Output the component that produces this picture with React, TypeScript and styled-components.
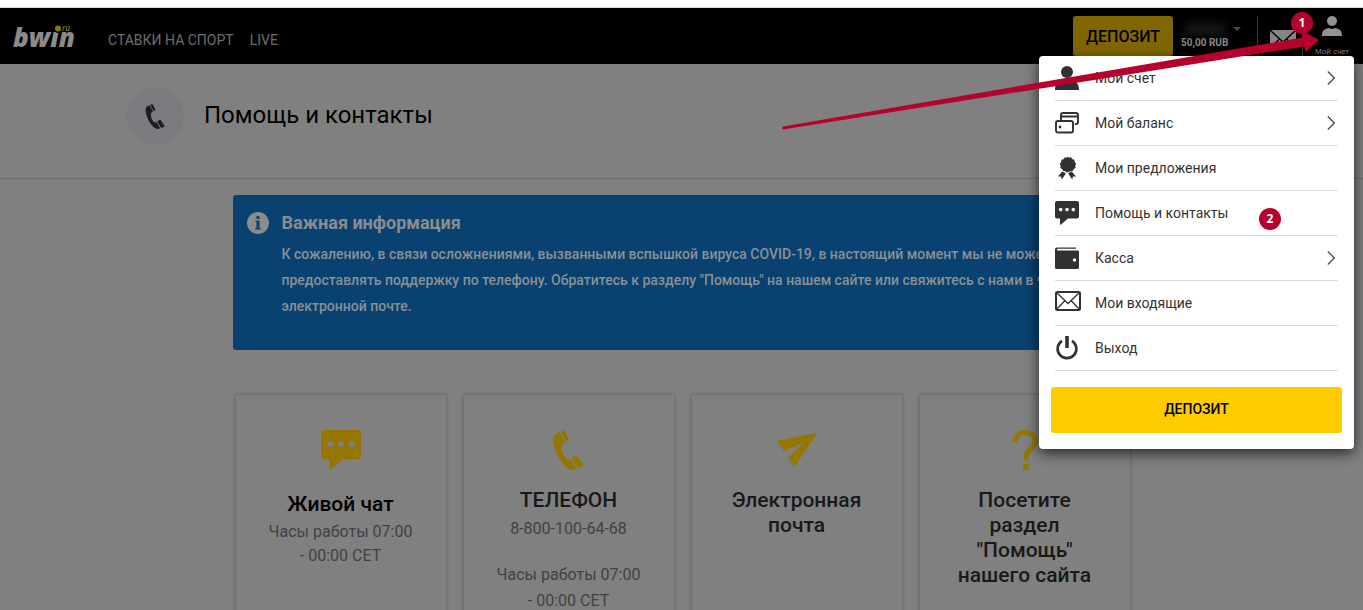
import React from 'react';
import styled, { createGlobalStyle } from 'styled-components';

const Global = createGlobalStyle`
  *, *::before, *::after { box-sizing: border-box; }
  body {
    margin: 0;
    background: #808080;
    color: #000;
    font-family: Roboto, "Liberation Sans", sans-serif;
    overflow-x: hidden;
  }
  h1, h2, h3, p, ul { margin: 0; padding: 0; }
  ul { list-style: none; }
  a { color: inherit; text-decoration: none; }
  button { font-family: inherit; cursor: pointer; border: 0; }
  svg { display: block; flex: none; }
`;

const Page = styled.div`
  position: relative;
  display: flex;
  flex-direction: column;
  height: 100vh;
  overflow: hidden;
`;

const TopStrip = styled.div`
  flex: none;
  height: 8px;
  background: #fff;
  border-bottom: 1px solid #d8d8d8;
`;

const Header = styled.header`
  flex: none;
  display: flex;
  align-items: flex-start;
  height: 56px;
  padding: 0 13px 0 12px;
  background: #000;
`;

const Logo = styled.a`
  flex: none;
  display: block;
  margin-top: 8px;
`;

const MainNav = styled.nav`
  display: flex;
  gap: 16px;
  margin: 24px auto 0 28px;
  font-size: 14px;
  line-height: 16px;
  color: #6e6e6e;
`;

const HeaderDeposit = styled.button`
  width: 100px;
  height: 40px;
  margin-top: 8px;
  padding: 0;
  border-radius: 3px;
  background: #806600;
  color: #000;
  font-size: 16px;
  font-weight: 500;
`;

const Balance = styled.a`
  display: grid;
  grid-template-columns: 52px 10px;
  align-items: center;
  margin: 14px 0 0 8px;
  color: #8b8b8b;
  font-size: 10px;
  line-height: 14px;
  font-weight: 700;
`;

const HiddenName = styled.span`
  width: 40px;
  height: 10px;
  margin: 2px 4px;
  background: #1c1c1c;
  filter: blur(4px);
`;

const HeaderIcon = styled.a`
  display: flex;
  justify-content: center;
  width: 46px;
  height: 40px;
  margin: 8px 0 0 14px;
  padding: 14px 0 0 6px;
  border-left: 1px solid #3c3c3c;
  border-right: 1px solid #3c3c3c;
`;

const Account = styled.a`
  display: flex;
  flex-direction: column;
  align-items: center;
  gap: 12px;
  width: 36px;
  margin-top: 8px;
  margin-left: 11px;
  color: #8b8b8b;
  font-family: "Liberation Sans", sans-serif;
  font-size: 8px;
  line-height: 8px;
  white-space: nowrap;
`;

const TitleBar = styled.section`
  flex: none;
  height: 115px;
  padding: 23px 16px 0;
  border-bottom: 1px solid #6c6c6c;
`;

const TitleInner = styled.div`
  display: flex;
  align-items: center;
  gap: 20px;
  max-width: 1111px;
  margin: 0 auto;
`;

const PhoneDisc = styled.span`
  display: grid;
  place-items: center;
  width: 58px;
  height: 58px;
  border-radius: 50%;
  background: #797b7f;
`;

const Title = styled.h1`
  font-size: 24px;
  line-height: 32px;
  font-weight: 400;
  padding-bottom: 2px;
`;

const Content = styled.main`
  flex: 1;
  display: flex;
  flex-direction: column;
  width: 100%;
  max-width: 898px;
  margin: 16px auto 0;
`;

const Notice = styled.section`
  display: flex;
  gap: 13px;
  align-items: flex-start;
  padding: 16px 16px 31px 14px;
  border-radius: 3px;
  background: #094170;
  color: #8a9095;
`;

const NoticeTitle = styled.h2`
  margin-bottom: 6px;
  font-size: 18px;
  line-height: 24px;
  font-weight: 700;
  color: #8c8c8c;
`;

const NoticeText = styled.p`
  font-size: 14px;
  line-height: 26px;
  font-weight: 500;
`;

const Cards = styled.div`
  flex: 1;
  display: grid;
  grid-template-columns: repeat(4, minmax(0, 1fr));
  gap: 16px;
  margin-top: 44px;
  padding-left: 2px;
`;

const Card = styled.a`
  display: flex;
  flex-direction: column;
  align-items: center;
  min-height: 240px;
  padding: 35px 30px 24px;
  border: 1px solid #727272;
  border-radius: 3px;
  box-shadow: 0 0 3px #666;
  text-align: center;
`;

const CardTitle = styled.h3<{ $strong?: boolean }>`
  margin-top: ${(p) => (p.$strong ? 22 : 18)}px;
  font-size: 21px;
  line-height: 25px;
  font-weight: 500;
  color: ${(p) => (p.$strong ? '#000' : '#19191b')};
`;

const CardText = styled.p<{ $line: number; $gap?: number }>`
  margin-top: ${(p) => p.$gap ?? 3}px;
  font-size: 16px;
  line-height: ${(p) => p.$line}px;
  color: #404244;
  width: 148px;
`;

const Menu = styled.nav`
  position: absolute;
  top: 56px;
  right: 9px;
  width: 315px;
  padding: 0 12px 16px;
  border-radius: 4px;
  background: #fff;
  box-shadow: 0 4px 14px rgba(0, 0, 0, 0.7);
`;

const MenuLink = styled.a`
  display: grid;
  grid-template-columns: 26px 1fr 8px;
  gap: 14px;
  align-items: center;
  height: 45px;
  margin: 0 4px;
  padding-right: 3px;
  border-bottom: 1px solid #dcdcdc;
  color: #333;
  font-size: 14px;
  line-height: 20px;
`;

const MenuDeposit = styled.button`
  width: 100%;
  height: 46px;
  margin-top: 16px;
  padding: 0 0 2px;
  border-radius: 3px;
  background: #fc0;
  color: #000;
  font-size: 14px;
  font-weight: 500;
`;

const Arrow = styled.svg`
  position: absolute;
  top: 28px;
  right: 43px;
  pointer-events: none;
`;

const Badge = styled.span<{ $top: number; $right: number }>`
  position: absolute;
  top: ${(p) => p.$top}px;
  right: ${(p) => p.$right}px;
  width: 22px;
  height: 22px;
  border-radius: 50%;
  background: #b5022c;
  color: #fff;
  font: 700 12px/22px "Open Sans", "Noto Sans", sans-serif;
  text-align: center;
`;

const INK = '#2f3133';
const GOLD = '#947600';

const PersonIcon = ({ color, size }: { color: string; size: number }) => (
  <svg width={size} height={size} viewBox="0 0 24 24" fill={color}>
    <circle cx="12" cy="6" r="6" />
    <path d="M0 24c0-6 2-8 8-9.500Q12 16.500 16 14.500C22 16 24 18 24 24Z" />
  </svg>
);

const CardsIcon = () => (
  <svg width="24" height="24" viewBox="0 0 24 24" fill="none" stroke={INK} strokeWidth="1.900">
    <path d="M6 9V4q0-2 2-2h13q2 0 2 2v7q0 2-2 2h-1" />
    <path d="M6 5.500h17" strokeWidth="2" />
    <rect x="1" y="10" width="17" height="11.500" rx="2" />
    <circle cx="5" cy="16" r="1.400" fill={INK} stroke="none" />
  </svg>
);

const AwardIcon = () => (
  <svg width="24" height="24" viewBox="0 0 24 24" fill={INK}>
    <path d="M12 .5l1.900 1.300 2.200-.6 1.200 2 2.200.5.100 2.300 1.600 1.700-1 2 .5 2.300-2 1-.8 2.100-2.300.1L12 16.500l-1.700-1.300-2.200-.1-.9-2.100-2-1 .5-2.300-1-2 1.600-1.700.1-2.300 2.200-.5 1.200-2 2.200.6z" />
    <path d="M7.200 15.500 3 20.500l3 .1.800 2.900L11 17.300zM16.800 15.500l4.200 5-3 .1-.8 2.900L13 17.300z" />
  </svg>
);

const ChatIcon = ({ color, dot, size }: { color: string; dot: string; size: number }) => (
  <svg width={size} height={size} viewBox="0 0 24 24">
    <path fill={color} d="M2 0h20q2 0 2 2v13.500q0 2-2 2h-9L6 23.500q-1 .8-1-.5v-5.500H2q-2 0-2-2V2q0-2 2-2z" />
    <g fill={dot}>
      <circle cx="5.700" cy="8.600" r="1.800" />
      <circle cx="12" cy="8.600" r="1.800" />
      <circle cx="18.300" cy="8.600" r="1.800" />
    </g>
  </svg>
);

const WalletIcon = () => (
  <svg width="24" height="24" viewBox="0 0 24 24" fill={INK}>
    <path d="M2 1.500h19v1.200H2.800q-.9 0-.9.900 0 .9.900.9H22.500q1.500 0 1.500 1.500v15.500q0 1.500-1.500 1.500h-21Q0 23 0 21.500v-18q0-2 2-2z" />
    <circle cx="19.500" cy="14" r="1.700" fill="#fff" />
  </svg>
);

const MailIcon = () => (
  <svg width="26" height="24" viewBox="0 0 26 24" fill="none" stroke={INK}>
    <rect x="1" y="1" width="24" height="18" rx="1.500" strokeWidth="2" />
    <path d="m1.500 1.500 11.500 11 11.500-11M1.500 18.500l8.500-9M24.500 18.500l-8.500-9" strokeWidth="1.300" />
  </svg>
);

const PowerIcon = () => (
  <svg width="24" height="24" viewBox="0 0 24 24" fill="none" stroke={INK}>
    <path d="M7 4.800a9.400 9.400 0 1 0 10 0" strokeWidth="2.600" />
    <path d="M12 0v12" strokeWidth="3.600" />
  </svg>
);

const PhoneIcon = ({ color, size }: { color: string; size: number }) => (
  <svg width={size} height={size} viewBox="0 0 40 40" fill={color}>
    <path d="M10.500 2C5 3.500 3.500 7.500 4.500 13 6.500 24 13.500 35.500 20.500 39.300c2.500.9 4.500.7 7-.5L22 29.500c-2.500.5-4 .2-5.500-1.500-2.300-3-3.800-7-4-11-.1-2 .8-3.300 3.500-5z" />
    <path d="M11.500 1.200 14 .2q1-.4 1.500.5l4.300 7.800q.4 1-.5 1.600L16.800 11.300zM22.800 27.800l4-2.500q1-.5 1.600.4l6 8.900q.5 1-.4 1.700L29 38.500z" />
  </svg>
);

const PlaneIcon = () => (
  <svg width="40" height="40" viewBox="0 0 40 40" fill={GOLD}>
    <path d="M0 10.500 40 3 17.500 37 11 27.500 27.500 12.500 7 21z" />
  </svg>
);

const QuestionIcon = () => (
  <svg width="40" height="40" viewBox="0 0 40 40">
    <path d="M10 12.500C10 6 14 2.600 20 2.600s10 3.300 10 8.900c0 7-9 8.500-9 15.500v3.500" fill="none" stroke={GOLD} strokeWidth="5" />
    <path fill={GOLD} d="M18.200 34h5.600v6h-5.600z" />
  </svg>
);

const InfoIcon = () => (
  <svg width="22" height="24" viewBox="0 -1 22 24">
    <circle cx="11" cy="11" r="11" fill="#8c8c8c" />
    <path fill="#094170" d="M9.500 4h3v3h-3zM8.500 8.500h4V16h1.200v1.500H8.300V16h1.200v-6h-1z" />
  </svg>
);

const Chevron = () => (
  <svg width="8" height="14" viewBox="0 0 8 14" fill="none" stroke="#444" strokeWidth="1.200">
    <path d="m.8.500 6.500 6.500-6.500 6.500" />
  </svg>
);

const menuItems = [
  { label: 'Мой счет', icon: <PersonIcon color={INK} size={24} />, more: true },
  { label: 'Мой баланс', icon: <CardsIcon />, more: true },
  { label: 'Мои предложения', icon: <AwardIcon /> },
  { label: 'Помощь и контакты', icon: <ChatIcon color={INK} dot="#fff" size={24} /> },
  { label: 'Касса', icon: <WalletIcon />, more: true },
  { label: 'Мои входящие', icon: <MailIcon /> },
  { label: 'Выход', icon: <PowerIcon /> },
];

export default function App() {
  return (
    <>
      <Global />
      <Page>
        <TopStrip />
        <Header>
          <Logo href="#" aria-label="bwin.ru">
            <svg width="68" height="40" viewBox="0 0 68 40">
              <text x="1" y="31" fontFamily="Open Sans" fontWeight="800" fontStyle="italic" fontSize="26" fill="#8b8b8b">bwin</text>
              <circle cx="46" cy="12" r="5" fill="#000" />
              <circle cx="46" cy="12.500" r="3" fill="#857a12" />
              <text x="50" y="15" fontFamily="Open Sans" fontStyle="italic" fontWeight="600" fontSize="8" fill="#857a12">ru</text>
            </svg>
          </Logo>
          <MainNav>
            <a href="#">СТАВКИ НА СПОРТ</a>
            <a href="#">LIVE</a>
          </MainNav>
          <HeaderDeposit>ДЕПОЗИТ</HeaderDeposit>
          <Balance href="#">
            <HiddenName />
            <svg width="8" height="4" viewBox="0 0 8 4"><path d="M0 0h8L4 4z" fill="#4a4a4a" /></svg>
            <span>50,00 RUB</span>
          </Balance>
          <HeaderIcon href="#" aria-label="Мои входящие">
            <svg width="26" height="18" viewBox="0 0 26 18">
              <path fill="#858585" d="M0 0h26v18H0z" />
              <path d="m0 0 13 12L26 0M0 18l9.500-9M26 18l-9.500-9" fill="none" stroke="#000" strokeWidth="1.300" />
            </svg>
          </HeaderIcon>
          <Account href="#">
            <PersonIcon color="#929292" size={20} />
            Мой счет
          </Account>
        </Header>

        <TitleBar>
          <TitleInner>
            <PhoneDisc><PhoneIcon color="#1c1e20" size={25} /></PhoneDisc>
            <Title>Помощь и контакты</Title>
          </TitleInner>
        </TitleBar>

        <Content>
          <Notice>
            <InfoIcon />
            <div>
              <NoticeTitle>Важная информация</NoticeTitle>
              <NoticeText>
                К сожалению, в связи осложнениями, вызванными вспышкой вируса COVID-19, в настоящий момент мы не можем
                предоставлять поддержку по телефону. Обратитесь к разделу "Помощь" на нашем сайте или свяжитесь с нами в чате или по
                электронной почте.
              </NoticeText>
            </div>
          </Notice>

          <Cards>
            <Card href="#">
              <ChatIcon color={GOLD} dot="#808080" size={40} />
              <CardTitle $strong>Живой чат</CardTitle>
              <CardText $line={24}>Часы работы 07:00 - 00:00 CET</CardText>
            </Card>
            <Card href="#">
              <PhoneIcon color={GOLD} size={40} />
              <CardTitle>ТЕЛЕФОН</CardTitle>
              <CardText $line={26}>8-800-100-64-68</CardText>
              <CardText $line={26} $gap={20}>Часы работы 07:00 - 00:00 CET</CardText>
            </Card>
            <Card href="#">
              <PlaneIcon />
              <CardTitle>Электронная почта</CardTitle>
            </Card>
            <Card href="#">
              <QuestionIcon />
              <CardTitle>Посетите раздел "Помощь" нашего сайта</CardTitle>
            </Card>
          </Cards>
        </Content>

        <Menu aria-label="Мой счет">
          <ul>
            {menuItems.map((item) => (
              <li key={item.label}>
                <MenuLink href="#">
                  {item.icon}
                  <span>{item.label}</span>
                  {item.more && <Chevron />}
                </MenuLink>
              </li>
            ))}
          </ul>
          <MenuDeposit>ДЕПОЗИТ</MenuDeposit>
        </Menu>

        <Arrow width="540" height="104" viewBox="780 28 540 104" aria-hidden="true">
          <path fill="#b5022c" d="M783 126.500 1303 37.500 1301 30 1319 40 1306 52 1304 46.500 783 129.500q-2-1.500 0-3z" />
        </Arrow>
        <Badge $top={12} $right={50}>1</Badge>
        <Badge $top={208} $right={82}>2</Badge>
      </Page>
    </>
  );
}
